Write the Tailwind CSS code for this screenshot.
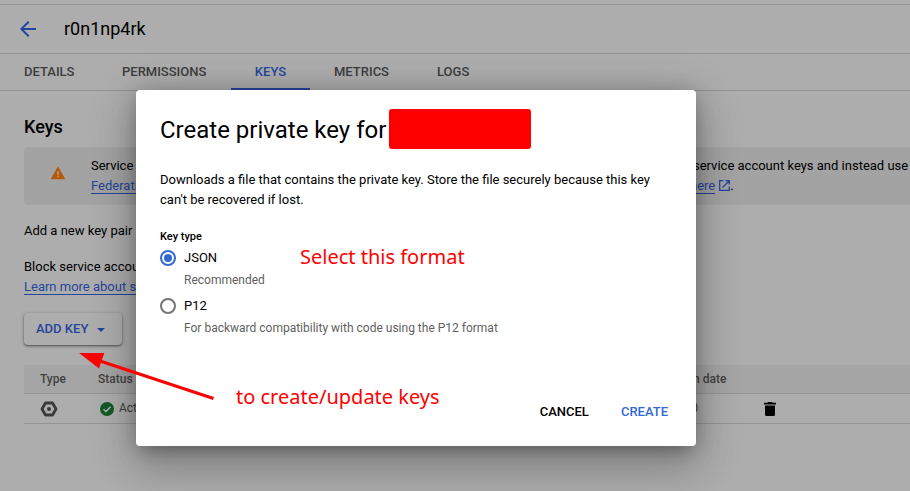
<!DOCTYPE html>
<html lang="en">
<head>
<meta charset="utf-8">
<title>Service account keys</title>
<script src="https://cdn.jsdelivr.net/npm/@tailwindcss/browser@4"></script>
</head>
<body class="relative h-[491px] w-[910px] overflow-hidden bg-[#adadad] font-[Roboto,sans-serif] text-[13px] leading-5 text-black">
<div class="flex h-full w-full flex-col overflow-hidden whitespace-nowrap">
  <div class="h-[5px] shrink-0 border-b border-[#949494]"></div>
  <header class="flex h-[49px] shrink-0 items-center border-b border-[#949494] pl-4">
    <svg class="size-6 fill-[#24459c]" viewBox="0 0 24 24"><path d="M20 11H7.83l5.59-5.59L12 4l-8 8 8 8 1.41-1.41L7.83 13H20z"/></svg>
    <h1 class="ml-6 text-[18px] leading-6">r0n1np4rk</h1>
  </header>
  <nav class="flex h-[37px] shrink-0 border-b border-[#949494] font-medium leading-[35px] text-[#3c3c3c]">
    <span class="w-[98px] pl-6">DETAILS</span>
    <span class="w-[133px] pl-6">PERMISSIONS</span>
    <span class="h-9 w-[79px] border-b-2 border-[#24459c] text-center text-[#24459c]">KEYS</span>
    <span class="w-[103px] pl-6">METRICS</span>
    <span class="pl-6">LOGS</span>
  </nav>
  <main class="pl-6 pt-6">
    <h2 class="text-[18px] font-medium leading-6">Keys</h2>
    <div class="mt-2 flex h-[58px] w-[920px] rounded-l bg-[#a3a3a3] pt-[9px]">
      <svg class="ml-[26px] mt-[9px] size-4 fill-[#b65808]" viewBox="0 0 24 24"><path fill-rule="evenodd" d="M1 21.500h22L12 2zM13.200 18.500h-2.400v-2.400h2.400zm0-4h-2.400v-5h2.400z"/></svg>
      <div class="ml-[25px] flex-1">
        <div class="flex"><span class="w-[602px] overflow-hidden">Service</span><span>service account keys and instead use</span></div>
        <div class="flex"><span class="w-[599px] text-[#24459c]"><span class="border-b border-[#24459c]">Federation</span></span><span class="h-[18px] border-b border-[#24459c] text-[#24459c]">here</span>
          <svg class="ml-1 mt-[4px] size-[11px] fill-none stroke-[#24459c]" viewBox="0 0 11 11" stroke-width="1.3"><path d="M4.500.7H.7v9.600h9.600V6.500M6.500.7h3.800v3.800M10.300.7 3.500 7.500"/></svg><span>.</span></div>
      </div>
    </div>
    <p class="mt-4">Add a new key pair</p>
    <p class="mt-4">Block service accou</p>
    <p class="text-[#24459c]"><span class="border-b border-[#24459c]">Learn more about s</span></p>
    <button class="mt-4 flex h-8 w-[98px] items-center rounded bg-[#adadad] pl-3 font-medium text-[#24459c] shadow-[0_1px_2px_rgba(0,0,0,0.45),0_1px_4px_rgba(0,0,0,0.2)]">ADD KEY<svg class="ml-[9px] mt-px h-1 w-2 fill-[#24459c]" viewBox="0 0 8 4"><path d="M0 0h8L4 4z"/></svg></button>
    <section class="mt-5 w-[900px]">
      <div class="flex h-[29px] items-center border-b border-[#949494] bg-[#a5a5a5] text-[12px] font-medium text-[#424242]">
        <span class="w-[58px] pl-4">Type</span><span class="w-[611px] pl-4">Status</span><span>n date</span>
      </div>
      <div class="flex h-[30px] items-center border-b border-[#949494] text-[12px] text-[#3c3c3c]">
        <svg class="ml-4 h-4 w-[18px]" viewBox="0 0 18 16"><path d="M5.500 2h7L16 8l-3.500 6h-7L2 8z" fill="none" stroke="#3a3a3a" stroke-width="2.800" stroke-linejoin="round"/><circle cx="9" cy="8" r="2" fill="#3a3a3a"/></svg>
        <svg class="ml-[42px] size-[14px]" viewBox="0 0 14 14"><circle cx="7" cy="7" r="7" fill="#125a27"/><path d="m3.500 7.200 2.400 2.400 4.700-4.800" fill="none" stroke="#adadad" stroke-width="1.500"/></svg>
        <span class="w-[560px] pb-0.5 pl-[5px]">Act</span><span class="w-6 pb-0.5 text-right text-[#3d3548]">0</span>
        <svg class="ml-[66px] h-[14px] w-3 fill-black" viewBox="0 0 12 14"><path d="M4 0h4l.7.8H12v1.700H0V.8h3.300zM1 3.500h10v9q0 1.500-1.500 1.500h-7Q1 14 1 12.500z"/></svg>
      </div>
    </section>
  </main>
</div>

<div role="dialog" class="absolute left-[136px] top-[90px] flex h-[356px] w-[560px] flex-col rounded bg-white px-6 shadow-[0_11px_15px_-7px_rgba(0,0,0,0.2),0_24px_38px_3px_rgba(0,0,0,0.14),0_9px_46px_8px_rgba(0,0,0,0.12),0_0_20px_rgba(0,0,0,0.18)]">
  <div class="mt-[19px] flex h-10 items-center text-[24px]"><h2 class="w-[229px] whitespace-nowrap pt-0.5">Create private key for</h2><span class="h-10 w-[142px] rounded-[3px] bg-[#ff0000]"></span></div>
  <p class="mt-[21px]">Downloads a file that contains the private key. Store the file securely because this key<br>can't be recovered if lost.</p>
  <p class="mt-[19px] text-[11px] font-medium leading-4">Key type</p>
  <div class="mt-[3px] flex h-5 items-center"><span class="flex size-4 items-center justify-center rounded-full border-2 border-[#3367d6]"><span class="size-2 rounded-full bg-[#3367d6]"></span></span><span class="ml-2">JSON</span></div>
  <p class="ml-6 mt-0.5 text-[12px] leading-5 text-[#5f5f5f]">Recommended</p>
  <div class="mt-[6px] flex h-5 items-center"><span class="size-4 rounded-full border-2 border-[#757575]"></span><span class="ml-2">P12</span></div>
  <p class="ml-6 mt-0.5 text-[12px] leading-5 text-[#5f5f5f]">For backward compatibility with code using the P12 format</p>
  <div class="mb-6 mt-auto flex justify-end gap-8 pr-1 font-medium"><span>CANCEL</span><span class="text-[#3367d6]">CREATE</span></div>
</div>

<!-- Annotations drawn over the dialog -->
<div class="absolute left-[300px] top-[243px] whitespace-nowrap font-['Noto_Sans',sans-serif] text-[20px] leading-7 text-[#ff0000]">Select this format</div>
<div class="absolute left-[236px] top-[383px] whitespace-nowrap font-['Noto_Sans',sans-serif] text-[20px] leading-7 text-[#ff0000]">to create/update keys</div>
<svg class="absolute left-[76px] top-[348px] h-[56px] w-[144px]" viewBox="0 0 144 56"><path d="M24 13 137.500 50.500" stroke="#f00" stroke-width="3"/><path d="M3 5h25.300L23 20.500z" fill="#f00"/></svg>
</body>
</html>
